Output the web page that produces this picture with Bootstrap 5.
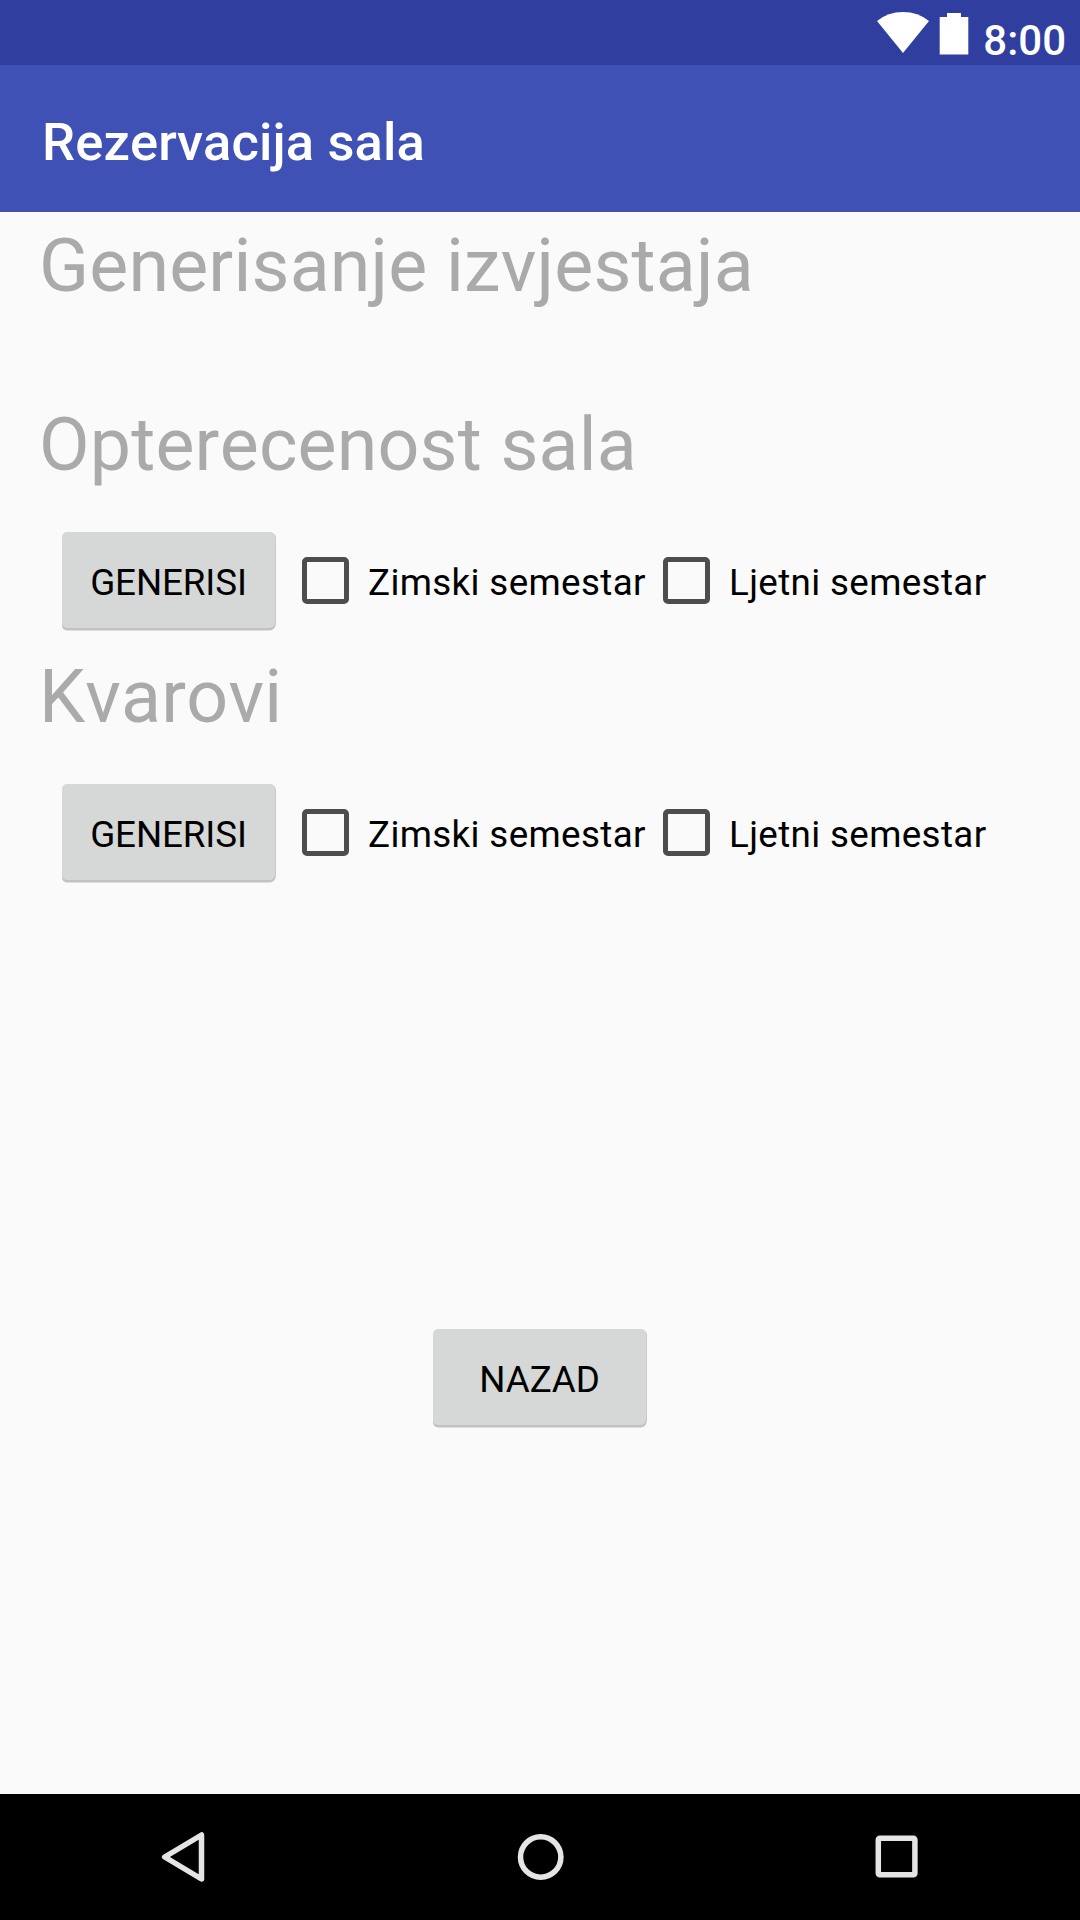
<!DOCTYPE html>
<html lang="bs">
<head>
<meta charset="utf-8">
<meta name="viewport" content="width=device-width, initial-scale=1">
<title>Rezervacija sala</title>
<link href="https://cdn.jsdelivr.net/npm/bootstrap@5.3.0/dist/css/bootstrap.min.css" rel="stylesheet">
<style>
html, body { height: 100%; }
body { font-family: Roboto, "Noto Sans", sans-serif; background: #fafafa; color: #000; overflow: hidden; }
.screen { width: 1080px; height: 1920px; }
.status-bar { height: 65px; background: #303f9f; padding-right: 14px; }
.clock { font-size: 42px; line-height: 50px; font-weight: 500; margin: 16px 0 0 13px; }
.app-bar { height: 147px; background: #3f51b5; padding: 6px 42px 0; }
.app-title { font-size: 52.5px; line-height: 62px; font-weight: 500; font-kerning: none; letter-spacing: .13px; }
.content { padding: 11px 39px 0; }
.section-title { font-size: 73.5px; line-height: 86px; font-weight: 400; font-kerning: none; letter-spacing: .19px; color: #aaa; white-space: nowrap; }
.title-gap { margin-bottom: 93px; }
.option-row { margin: 44px 0 23px 23px; height: 99px; }
.btn-flat { --bs-btn-color: #000; --bs-btn-bg: #d6d7d7; --bs-btn-hover-bg: #cacbcb; --bs-btn-hover-color: #000;
  width: 213px; height: 96px; padding: 6px 0 0; font-size: 36.75px; line-height: 1.2; letter-spacing: -.1px; border: 0; border-radius: 5px;
  box-shadow: 0 2.5px 0 #c1c2c2, 1px 1px 0 #c9caca; }
.option-check { height: 97px; padding: 0; margin: 0; min-height: 0; }
.option-check .form-check-input { float: none; margin: 0; width: 47px; height: 47px; border: 5px solid #4d4d4d; border-radius: 5px; background-color: #fafafa; flex: none; }
.option-check .form-check-label { font-size: 36.75px; line-height: 44px; letter-spacing: .36px; white-space: nowrap; padding: 4px 0 0 19px; }
.first-option { margin-left: 27px; width: 361px; }
.back-row { margin-top: 422px; padding-right: 1px; }
.nav-keys { height: 126px; background: #000; }
</style>
<script src="https://cdn.jsdelivr.net/npm/bootstrap@5.3.0/dist/js/bootstrap.bundle.min.js"></script>
</head>
<body>
<div class="screen d-flex flex-column">
  <div class="status-bar d-flex justify-content-end align-items-start text-white flex-shrink-0">
    <svg width="94" height="65" viewBox="0 0 94 65" fill="#fff" aria-hidden="true">
      <path d="M1 21Q12 12 27 12T53 21L27 53Z"/>
      <path d="M71 13H85V17H92.3V54.5H63.7V17H71Z"/>
    </svg>
    <span class="clock">8:00</span>
  </div>
  <header class="app-bar d-flex align-items-center text-white flex-shrink-0">
    <h1 class="app-title m-0">Rezervacija sala</h1>
  </header>
  <main class="content flex-grow-1">
    <h2 class="section-title mt-0 title-gap">Generisanje izvjestaja</h2>

    <h2 class="section-title m-0">Opterecenost sala</h2>
    <div class="option-row d-flex">
      <button type="button" class="btn btn-flat">GENERISI</button>
      <div class="form-check option-check first-option d-flex align-items-center">
        <input class="form-check-input" type="checkbox" id="load-winter">
        <label class="form-check-label" for="load-winter">Zimski semestar</label>
      </div>
      <div class="form-check option-check d-flex align-items-center">
        <input class="form-check-input" type="checkbox" id="load-summer">
        <label class="form-check-label" for="load-summer">Ljetni semestar</label>
      </div>
    </div>

    <h2 class="section-title m-0">Kvarovi</h2>
    <div class="option-row d-flex mb-0">
      <button type="button" class="btn btn-flat">GENERISI</button>
      <div class="form-check option-check first-option d-flex align-items-center">
        <input class="form-check-input" type="checkbox" id="fault-winter">
        <label class="form-check-label" for="fault-winter">Zimski semestar</label>
      </div>
      <div class="form-check option-check d-flex align-items-center">
        <input class="form-check-input" type="checkbox" id="fault-summer">
        <label class="form-check-label" for="fault-summer">Ljetni semestar</label>
      </div>
    </div>

    <div class="back-row d-flex justify-content-center pt-4">
      <button type="button" class="btn btn-flat">NAZAD</button>
    </div>
  </main>
  <nav class="nav-keys flex-shrink-0">
    <svg class="d-block" width="1080" height="126" viewBox="0 0 1080 126" fill="none" stroke="#e5e5e5" stroke-width="5.5" aria-hidden="true">
      <path d="M164.7 63L201.5 41V85Z" stroke-linejoin="round"/>
      <circle cx="540.7" cy="63" r="20.2"/>
      <rect x="878.3" y="44.2" width="36.6" height="36.6" rx="1.5"/>
    </svg>
  </nav>
</div>
</body>
</html>
